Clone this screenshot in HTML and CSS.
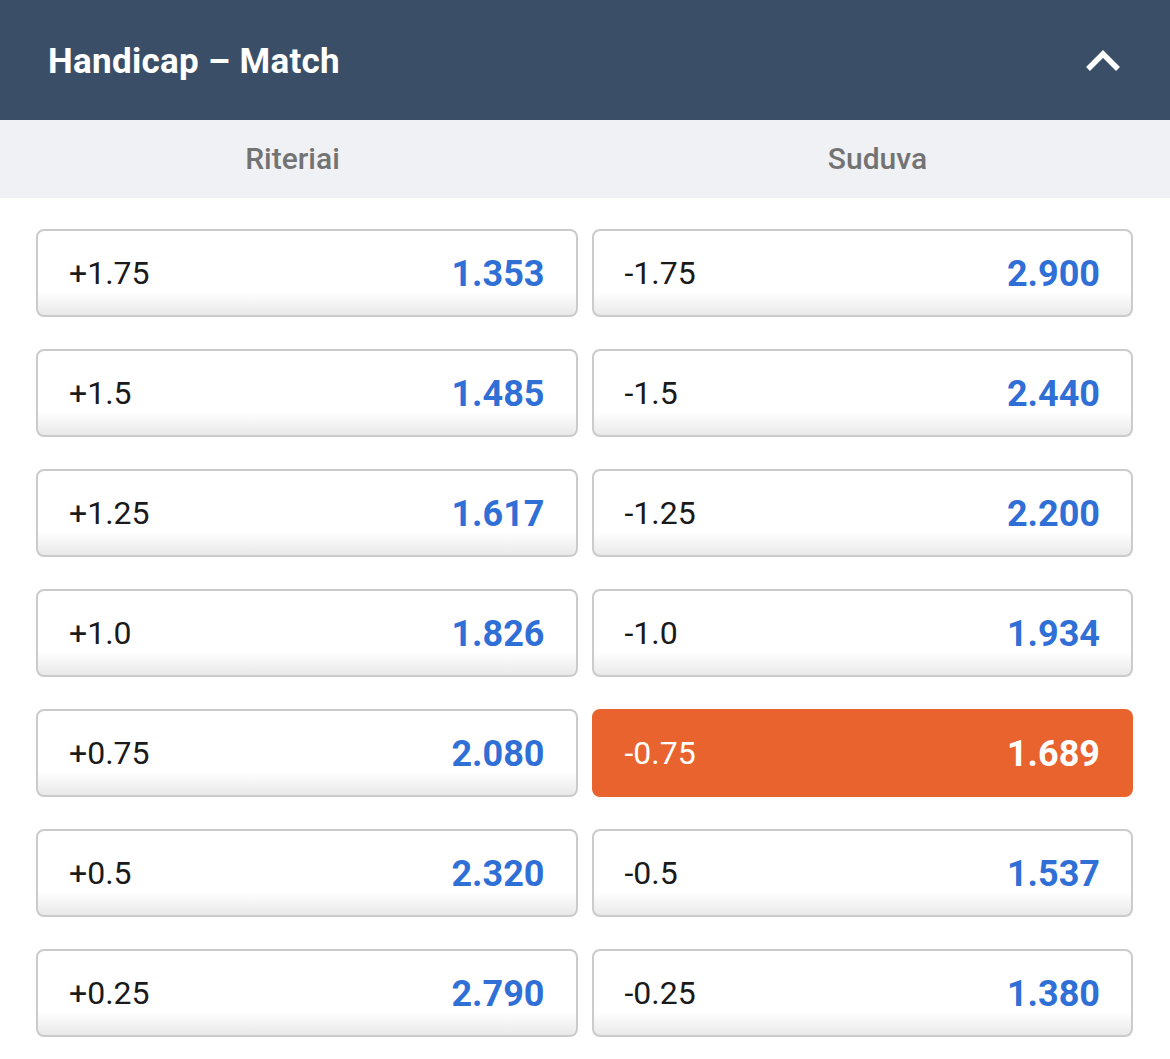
FILE: index.html
```html
<!DOCTYPE html>
<html lang="en">
<head>
  <meta charset="UTF-8" />
  <meta name="viewport" content="width=device-width, initial-scale=1" />
  <title>Handicap - Match</title>
  <link rel="stylesheet" href="styles.css">
</head>

<body>
  <section class="market">
    <!-- Market header -->
    <header class="market-head">
      <h1>Handicap – Match</h1>
      <svg class="chevron" width="40" height="28" viewBox="0 0 40 28">
        <polyline points="5,22 20,7 35,22" fill="none" stroke="#fff" stroke-width="5.5" stroke-linecap="butt" stroke-linejoin="miter" />
      </svg>
    </header>

    <!-- Team names -->
    <div class="teams">
      <div class="team">Riteriai</div>
      <div class="team">Suduva</div>
    </div>

    <!-- Odds grid -->
    <div class="odds">
      <button class="pick"><span class="line">+1.75</span><span class="price">1.353</span></button>
      <button class="pick"><span class="line">-1.75</span><span class="price">2.900</span></button>

      <button class="pick"><span class="line">+1.5</span><span class="price">1.485</span></button>
      <button class="pick"><span class="line">-1.5</span><span class="price">2.440</span></button>

      <button class="pick"><span class="line">+1.25</span><span class="price">1.617</span></button>
      <button class="pick"><span class="line">-1.25</span><span class="price">2.200</span></button>

      <button class="pick"><span class="line">+1.0</span><span class="price">1.826</span></button>
      <button class="pick"><span class="line">-1.0</span><span class="price">1.934</span></button>

      <button class="pick"><span class="line">+0.75</span><span class="price">2.080</span></button>
      <button class="pick selected"><span class="line">-0.75</span><span class="price">1.689</span></button>

      <button class="pick"><span class="line">+0.5</span><span class="price">2.320</span></button>
      <button class="pick"><span class="line">-0.5</span><span class="price">1.537</span></button>

      <button class="pick"><span class="line">+0.25</span><span class="price">2.790</span></button>
      <button class="pick"><span class="line">-0.25</span><span class="price">1.380</span></button>
    </div>
  </section>
</body>
</html>
```

FILE: styles.css
```css
/* Base */
body {
  margin: 0;
  font-family: Roboto, 'Noto Sans', sans-serif;
  background: #fff;
}

/* Header bar */
.market-head {
  height: 120px;
  background: #3b4e68;
  display: flex;
  align-items: center;
  justify-content: space-between;
  padding: 0 47px 0 48px;
}

.market-head h1 {
  margin: 3px 0 0;
  font-size: 35px;
  font-weight: 700;
  color: #fff;
  letter-spacing: 0.3px;
}

.chevron {
  display: block;
  margin-top: 2px;
}

/* Team names */
.teams {
  height: 78px;
  background: #f0f1f5;
  display: grid;
  grid-template-columns: 1fr 1fr;
  align-items: center;
}

.team {
  text-align: center;
  font-size: 30px;
  font-weight: 500;
  color: #737373;
  margin-top: -2px;
}

/* Odds buttons */
.odds {
  display: grid;
  grid-template-columns: 1fr 1fr;
  column-gap: 14px;
  row-gap: 32px;
  padding: 31px 37px 20px 36px;
}

.pick {
  height: 88px;
  display: flex;
  align-items: center;
  justify-content: space-between;
  padding: 0 31px 0 31px;
  border: 2px solid #cbcbcb;
  border-radius: 8px;
  background: linear-gradient(to bottom, #fff 0%, #fff 72%, #e9e9e9 100%);
  font-family: Roboto, 'Noto Sans', sans-serif;
  cursor: pointer;
}

.pick .line {
  font-size: 32px;
  color: #1a1a1a;
}

.pick .price {
  font-size: 36px;
  font-weight: 700;
  color: #2f6fd6;
  margin-top: 2px;
}

/* Selected pick */
.pick.selected {
  background: #e8632d;
  border-color: #e8632d;
}

.pick.selected .line,
.pick.selected .price {
  color: #fff;
}
```
